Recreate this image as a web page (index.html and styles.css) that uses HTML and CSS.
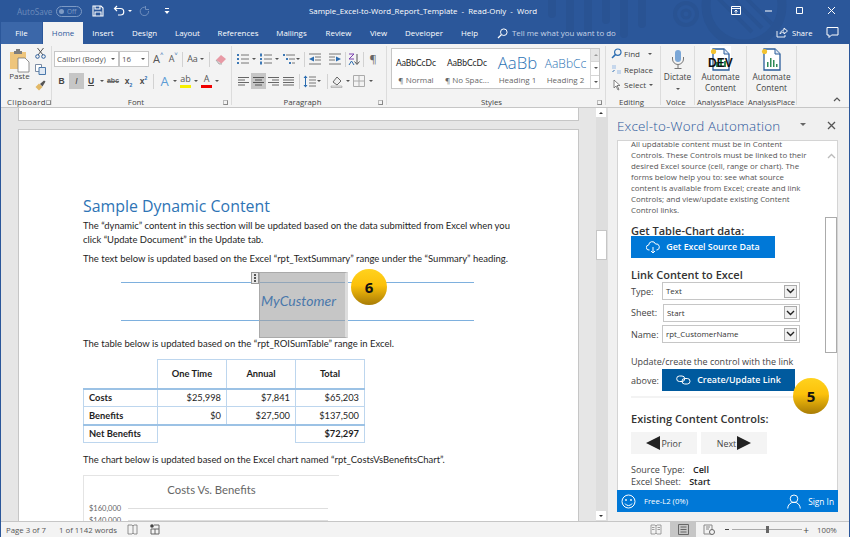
FILE: index.html
```html
<!DOCTYPE html>
<html lang="en">
<head>
<meta charset="utf-8">
<title>Sample_Excel-to-Word_Report_Template - Read-Only - Word</title>
<link rel="stylesheet" href="styles.css">
</head>
<body>
<div class="app">
  <header class="head">
    <svg class="decor" viewBox="0 0 430 44" width="430" height="44" aria-hidden="true">
      <g fill="none" stroke="#295393">
        <path d="M132 0v14M150 0v30M168 0v36M186 0v20M204 0v34M222 0v24" stroke-width="8" stroke-linecap="round"/>
        <circle cx="266" cy="14" r="11" stroke-width="4"/>
        <circle cx="266" cy="14" r="4" stroke-width="3"/>
        <circle cx="324" cy="6" r="38" stroke-width="9"/>
        <path d="M296 -4l36 36M306 -8l36 36M316 -12l36 36" stroke-width="4"/>
      </g>
    </svg>
    <div class="titlebar">
      <div class="qat">
        <span class="autosave">AutoSave</span>
        <span class="toggle"><i></i><b>Off</b></span>
        <svg class="q-save" width="12" height="12" viewBox="0 0 12 12"><path d="M1 1h8l2 2v8H1z M3 1v3h5V1 M3 11V7h6v4" fill="none" stroke="#fff" stroke-width="1.1"/></svg>
        <svg class="q-undo" width="12" height="12" viewBox="0 0 12 12"><path d="M4 1L1.500 3.500 4 6M2 3.500h5.500a3 3 0 0 1 0 6.500H5" fill="none" stroke="#fff" stroke-width="1.200"/></svg>
        <span class="car car-w"></span>
        <svg class="q-redo" width="11" height="11" viewBox="0 0 11 11"><path d="M7 1.500A4.200 4.200 0 1 0 9.600 5M6.500 0v3.500H10" fill="none" stroke="#6f8ebd" stroke-width="1"/></svg>
        <svg class="q-more" width="6" height="8" viewBox="0 0 6 8"><path d="M1 1h4v1H1zM.5 4h5L3 7z" fill="#fff"/></svg>
      </div>
      <div class="doc-title">Sample_Excel-to-Word_Report_Template &nbsp;-&nbsp; Read-Only &nbsp;-&nbsp; Word</div>
      <div class="winctl">
        <svg width="10" height="9" viewBox="0 0 10 9"><path d="M.5.500h9v8h-9zM.5 2.500h9M5 4v3.500M3.500 5.500L5 4l1.500 1.500" fill="none" stroke="#fff"/></svg>
        <svg width="9" height="9" viewBox="0 0 9 9"><path d="M1 5h7" stroke="#fff" fill="none"/></svg>
        <svg width="9" height="9" viewBox="0 0 9 9"><path d="M1.500 1.500h6v6h-6z" stroke="#fff" fill="none"/></svg>
        <svg width="9" height="9" viewBox="0 0 9 9"><path d="M1 1l7 7M8 1l-7 7" stroke="#fff" fill="none"/></svg>
      </div>
    </div>
    <nav class="tabs">
      <span class="tab t-file">File</span>
      <span class="tab t-home">Home</span>
      <span class="tab w40">Insert</span>
      <span class="tab w43">Design</span>
      <span class="tab w43">Layout</span>
      <span class="tab w58">References</span>
      <span class="tab w49">Mailings</span>
      <span class="tab w45">Review</span>
      <span class="tab w35">View</span>
      <span class="tab w56">Developer</span>
      <span class="tab w35">Help</span>
      <svg class="t-search" width="11" height="11" viewBox="0 0 11 11"><circle cx="6.800" cy="4.200" r="3.300" fill="none" stroke="#fff"/><path d="M4.400 6.600L1 10" stroke="#fff" stroke-width="1.300"/></svg>
      <span class="tellme">Tell me what you want to do</span>
      <span class="tab-right">
        <svg width="12" height="11" viewBox="0 0 12 11"><path d="M1 4v6h8V8M4 7c0-2 2-4 4-4V1l3.500 3L8 7V5C6 5 5 6 4 7z" fill="none" stroke="#fff" stroke-width=".9"/></svg>
        <span class="share">Share</span>
        <svg class="t-comment" width="12" height="11" viewBox="0 0 12 11"><path d="M.5.500h11v7.500H5L2.500 10.500V8h-2z" fill="none" stroke="#fff"/></svg>
      </span>
    </nav>
  </header>

  <section class="ribbon">
    <div class="group g-clip">
      <div class="g-body clip-body">
        <div class="paste">
          <svg width="21" height="24" viewBox="0 0 21 24"><path d="M1 3h16v17H1z" fill="#eec57c"/><path d="M5 2h8v3H5z" fill="#7d7d7d"/><path d="M7 0h4v2H7z" fill="#7d7d7d"/><path d="M9 9h7l4 4v10H9z" fill="#fff" stroke="#767676" stroke-width=".8"/></svg>
          <span>Paste</span>
          <span class="car"></span>
        </div>
        <div class="clip-tools">
          <svg width="11" height="12" viewBox="0 0 11 12"><path d="M2.500 1l5.500 7M8.500 1L3 8" stroke="#555" fill="none"/><circle cx="2.500" cy="9.500" r="1.800" fill="none" stroke="#2b5d9b"/><circle cx="8.500" cy="9.500" r="1.800" fill="none" stroke="#2b5d9b"/></svg>
          <svg width="11" height="11" viewBox="0 0 11 11"><path d="M.5.500h6v7h-6z" fill="#fff" stroke="#7a8ba3"/><path d="M4 3.500h6.500v7H4z" fill="#dfe8f3" stroke="#4a78ab"/></svg>
          <svg width="11" height="11" viewBox="0 0 11 11"><path d="M.5 7L4 10.500 7.500 7 4 3.500z" fill="#e2b866"/><path d="M5 4l2.500 2.500L10.500 1.500 9 .5z" fill="#555"/></svg>
        </div>
      </div>
      <div class="g-label"><span></span><span>Clipboard</span><span class="launch"></span></div>
    </div>

    <div class="group g-font">
      <div class="g-body rows">
        <div class="row r-font1">
          <span class="drop d-font">Calibri (Body)<span class="car"></span></span>
          <span class="drop d-size">16<span class="car"></span></span>
          <span class="gl w15 big">A<sup>˄</sup></span>
          <span class="gl w15 mid">A<sup>˅</sup></span>
          <span class="sep s-a"></span>
          <span class="gl w15 aa">Aa</span><span class="car"></span>
          <span class="sep s-er"></span>
          <svg class="erase" width="12" height="12" viewBox="0 0 12 12"><path d="M1 7l5-5 5 4-5 5z" fill="#e89aa5"/><path d="M1 7l3 4h3" fill="#ddd" stroke="#888" stroke-width=".6"/></svg>
        </div>
        <div class="row r-font2">
          <span class="gl w15 fm b">B</span>
          <span class="gl w15 fm i on">I</span>
          <span class="gl w14 fm u">U</span><span class="car c8"></span>
          <span class="gl w16 fm abc">abc</span>
          <span class="gl w15 fm xs">x<sub>2</sub></span>
          <span class="gl w15 fm xs">x<sup>2</sup></span>
          <span class="sep"></span>
          <span class="gl w15 texteff">A</span><span class="car c8"></span>
          <span class="gl w15 hl">ab<i class="yl"></i></span><span class="car c8"></span>
          <span class="gl w15 fc">A<i class="rd"></i></span><span class="car c8"></span>
        </div>
      </div>
      <div class="g-label"><span></span><span>Font</span><span class="launch"></span></div>
    </div>

    <div class="group g-para">
      <div class="g-body rows">
        <div class="row r-para1">
          <svg class="ic" width="14" height="12" viewBox="0 0 14 12"><path d="M1 1h2v2H1zM1 5h2v2H1zM1 9h2v2H1z" fill="#3d78b5"/><path d="M5 2h8M5 6h8M5 10h8" stroke="#777"/></svg><span class="car c8"></span>
          <svg class="ic" width="14" height="12" viewBox="0 0 14 12"><path d="M1 .5h2v3H1zM1 5h2v2H1zM1 8.500h2v3H1z" fill="#3d78b5"/><path d="M5 2h8M5 6h8M5 10h8" stroke="#777"/></svg><span class="car c8 c8b"></span>
          <svg class="ic" width="14" height="12" viewBox="0 0 14 12"><path d="M1 1h2v2H1zM4 5h2v2H4zM7 9h2v2H7z" fill="#3d78b5"/><path d="M4 2h9M7 6h6M10 10h3" stroke="#777"/></svg><span class="car c6"></span>
          <span class="sep s-p1"></span>
          <svg class="ic gap6" width="14" height="12" viewBox="0 0 14 12"><path d="M1 1h12M7 4h6M7 7h6M1 11h12" stroke="#777"/><path d="M6 3.500v5L1 6z" fill="#2b6cb0"/></svg>
          <svg class="ic gap6" width="14" height="12" viewBox="0 0 14 12"><path d="M1 1h12M1 4h6M1 7h6M1 11h12" stroke="#777"/><path d="M8 3.500v5L13 6z" fill="#2b6cb0"/></svg>
          <span class="sep s-p2"></span>
          <svg class="ic" width="12" height="13" viewBox="0 0 12 13"><path d="M9 1v10M6.500 8.500L9 11.500l2.500-3" stroke="#555" fill="none"/><path d="M1 1h5L1 6h5" stroke="#7a3fb0" fill="none"/><path d="M1 12l2.500-4L6 12" stroke="#2b6cb0" fill="none"/></svg>
          <span class="sep s-p3"></span>
          <span class="gl w15 pil">¶</span>
        </div>
        <div class="row r-para2">
          <svg class="al" width="15" height="11" viewBox="0 0 15 11"><path d="M2 1.500h11M2 4h7M2 6.500h11M2 9h7" stroke="#666"/></svg>
          <svg class="al on" width="15" height="16" viewBox="0 0 15 16"><path d="M2 4.500h11M4 7h7M2 9.500h11M4 12h7" stroke="#555"/></svg>
          <svg class="al" width="15" height="11" viewBox="0 0 15 11"><path d="M2 1.500h11M6 4h7M2 6.500h11M6 9h7" stroke="#666"/></svg>
          <svg class="al" width="15" height="11" viewBox="0 0 15 11"><path d="M2 1.500h11M2 4h11M2 6.500h11M2 9h11" stroke="#666"/></svg>
          <span class="sep s-p4"></span>
          <svg class="ic" width="13" height="13" viewBox="0 0 13 13"><path d="M6 2h7M6 5h7M6 8h7M6 11h7" stroke="#777"/><path d="M2.500 1v11" stroke="#2b6cb0"/><path d="M.5 3l2-2.500 2 2.500zM.5 10l2 2.500 2-2.500z" fill="#2b6cb0"/></svg><span class="car c-sp"></span>
          <span class="sep s-p5"></span>
          <svg class="ic" width="13" height="13" viewBox="0 0 13 13"><path d="M3 7l4-5 4 4-4 4z" fill="#eee" stroke="#666"/><path d="M1 11h11v1.500H1z" fill="#e8e8e8" stroke="#888" stroke-width=".5"/></svg><span class="car c-sh"></span>
          <svg class="ic gap3" width="12" height="12" viewBox="0 0 12 12"><path d="M.5.500h11v11H.5zM6 .5v11M.5 6h11" fill="none" stroke="#aaa"/></svg><span class="car c10"></span>
        </div>
      </div>
      <div class="g-label"><span></span><span>Paragraph</span><span class="launch"></span></div>
    </div>

    <div class="group g-styles">
      <div class="g-body">
        <div class="gallery">
          <div class="style s1"><span class="smp">AaBbCcDc</span><span class="nm">¶ Normal</span></div>
          <div class="style s2"><span class="smp">AaBbCcDc</span><span class="nm">¶ No Spac...</span></div>
          <div class="style s3"><span class="smp h1s">AaBb</span><span class="nm">Heading 1</span></div>
          <div class="style s4"><span class="smp h2s">AaBbCc</span><span class="nm">Heading 2</span></div>
          <div class="gal-sb">
            <span class="gs dis"><i class="car up"></i></span>
            <span class="gs"><i class="car"></i></span>
            <span class="gs"><i class="car"></i></span>
          </div>
        </div>
      </div>
      <div class="g-label"><span></span><span>Styles</span><span class="launch"></span></div>
    </div>

    <div class="group g-edit">
      <div class="g-body edit-body">
        <div class="ed"><svg width="11" height="11" viewBox="0 0 11 11"><circle cx="6.800" cy="4.200" r="3.200" fill="none" stroke="#2b6cb0" stroke-width="1.200"/><path d="M4.400 6.600L1 10" stroke="#2b6cb0" stroke-width="1.500"/></svg><span>Find</span><span class="car c-find"></span></div>
        <div class="ed"><svg width="11" height="11" viewBox="0 0 11 11"><path d="M1 1h4v4H1z" fill="#c6d7ec"/><path d="M6 6h4v4H6z" fill="#c6d7ec"/><path d="M1.500 8l2-2" stroke="#2b6cb0"/></svg><span>Replace</span></div>
        <div class="ed"><svg width="11" height="12" viewBox="0 0 11 12"><path d="M3 1v8l2-2 2 4 1-.5-2-4h3z" fill="#fff" stroke="#666" stroke-width=".8"/></svg><span>Select</span><span class="car"></span></div>
      </div>
      <div class="g-label"><span></span><span>Editing</span><span></span></div>
    </div>

    <div class="group g-voice">
      <div class="g-body big-btn">
        <svg width="14" height="21" viewBox="0 0 14 21"><rect x="4" y="1" width="6" height="12" rx="3" fill="#7ba7d7"/><path d="M1.500 8v2a5.500 5.500 0 0 0 11 0V8M7 16v3M3.500 19.500h7" fill="none" stroke="#777"/></svg>
        <span class="bb-t">Dictate</span>
        <span class="car"></span>
      </div>
      <div class="g-label"><span></span><span>Voice</span><span></span></div>
    </div>

    <div class="group g-ap">
      <div class="g-body big-btn">
        <div class="ap-ic dev">
          <svg width="21" height="23" viewBox="0 0 21 23"><path d="M3 1h11l5 5v16H3z" fill="#fff" stroke="#2b5d9b" stroke-width="1.300"/><path d="M14 1v5h5" fill="#dfe8f3" stroke="#2b5d9b"/><path d="M6 19V14h2v5zM10 19V10h2v9zM14 19v-6h2v6z" fill="#2f8a57"/><circle cx="3.500" cy="3.500" r="2.600" fill="#f2c230"/></svg>
          <span class="dev-t">DEV</span>
        </div>
        <span class="bb-t">Automate</span>
        <span class="bb-t">Content</span>
      </div>
      <div class="g-label ap-l"><span>AnalysisPlace</span></div>
    </div>

    <div class="group g-ap g-ap2">
      <div class="g-body big-btn">
        <div class="ap-ic">
          <svg width="21" height="23" viewBox="0 0 21 23"><path d="M3 1h11l5 5v16H3z" fill="#fff" stroke="#2b5d9b" stroke-width="1.300"/><path d="M14 1v5h5" fill="#dfe8f3" stroke="#2b5d9b"/><path d="M6 19V14h1.500v5zM9 19V10h1.500v9zM12 19v-7h1.500v7zM15 19v-3h1.500v3z" fill="#2f8a57"/><circle cx="3.500" cy="3.500" r="2.600" fill="#f2c230"/></svg>
        </div>
        <span class="bb-t">Automate</span>
        <span class="bb-t">Content</span>
      </div>
      <div class="g-label ap-l"><span>AnalysisPlace</span></div>
    </div>

    <div class="rib-end"><svg width="8" height="5" viewBox="0 0 8 5"><path d="M1 4l3-3 3 3" fill="none" stroke="#555" stroke-width="1.200"/></svg></div>
  </section>

  <main class="work">
    <div class="docarea">
      <div class="page page-prev"></div>
      <article class="page page-cur">
        <h1 class="d-h">Sample Dynamic Content</h1>
        <p class="d-p p-first">The “dynamic” content in this section will be updated based on the data submitted from Excel when you click “Update Document” in the Update tab.</p>
        <p class="d-p p-next">The text below is updated based on the Excel “rpt_TextSummary” range under the “Summary” heading.</p>
        <div class="cc-wrap">
          <div class="cc-line"></div>
          <div class="cc-box"><span class="cc-handle"><i></i><i></i><i></i></span><span class="cc-text">MyCustomer</span></div>
          <div class="badge b6">6</div>
        </div>
        <p class="d-p p-tbl">The table below is updated based on the “rpt_ROISumTable” range in Excel.</p>
        <table class="roi">
          <colgroup><col class="c-a"><col class="c-b"><col class="c-b"><col class="c-b"></colgroup>
          <tr class="r-h"><td class="none"></td><th>One Time</th><th>Annual</th><th>Total</th></tr>
          <tr class="r-b r-first"><th class="lh">Costs</th><td>$25,998</td><td>$7,841</td><td>$65,203</td></tr>
          <tr class="r-b"><th class="lh">Benefits</th><td>$0</td><td>$27,500</td><td>$137,500</td></tr>
          <tr class="r-b r-net"><th class="lh">Net Benefits</th><td class="none" colspan="2"></td><th class="rt">$72,297</th></tr>
        </table>
        <p class="d-p p-chart">The chart below is updated based on the Excel chart named “rpt_CostsVsBenefitsChart”.</p>
        <div class="chart">
          <div class="ch-title">Costs Vs. Benefits</div>
          <div class="ch-row"><span>$160,000</span><i></i></div>
          <div class="ch-row"><span>$140,000</span><i></i></div>
          <div class="ch-bar"></div>
        </div>
      </article>
    </div>

    <div class="vscroll">
      <span class="vs-btn"><i class="car up"></i></span>
      <span class="vs-thumb"></span>
      <span class="vs-btn vs-end"><i class="car"></i></span>
    </div>

    <aside class="pane">
      <div class="pane-head">
        <span class="pane-title">Excel-to-Word Automation</span>
        <span class="car pane-car"></span>
        <svg class="pane-x" width="9" height="9" viewBox="0 0 9 9"><path d="M1 1l7 7M8 1l-7 7" stroke="#555" stroke-width="1.300"/></svg>
      </div>
      <div class="pane-box">
        <div class="pane-main">
          <div class="pane-flow">
            <p class="intro">All updatable content must be in Content Controls. These Controls must be linked to their desired Excel source (cell, range or chart). The forms below help you to: see what source content is available from Excel; create and link Controls; and view/update existing Content Control links.</p>
            <h2 class="ph ph1">Get Table-Chart data:</h2>
            <button class="btn b-get">
              <svg width="14" height="13" viewBox="0 0 14 13"><path d="M3.500 9H3a2.500 2.500 0 0 1-.3-5A3.500 3.500 0 0 1 9.500 3 3 3 0 0 1 11 9h-.5" fill="none" stroke="#fff"/><path d="M7 6v6M5 10l2 2 2-2" fill="none" stroke="#fff"/></svg>
              Get Excel Source Data
            </button>
            <h2 class="ph ph2">Link Content to Excel</h2>
            <div class="fld f-type"><label>Type:</label><span class="sel"><span>Text</span><i class="sel-b"><svg width="9" height="6" viewBox="0 0 9 6"><path d="M1 1l3.500 3.500L8 1" fill="none" stroke="#222" stroke-width="1.400"/></svg></i></span></div>
            <div class="fld f-sheet"><label>Sheet:</label><span class="sel"><span>Start</span><i class="sel-b"><svg width="9" height="6" viewBox="0 0 9 6"><path d="M1 1l3.500 3.500L8 1" fill="none" stroke="#222" stroke-width="1.400"/></svg></i></span></div>
            <div class="fld"><label>Name:</label><span class="sel"><span>rpt_CustomerName</span><i class="sel-b"><svg width="9" height="6" viewBox="0 0 9 6"><path d="M1 1l3.500 3.500L8 1" fill="none" stroke="#222" stroke-width="1.400"/></svg></i></span></div>
            <p class="upd">Update/create the control with the link</p>
            <div class="upd-row">
              <span>above:</span>
              <button class="btn b-link">
                <svg width="15" height="10" viewBox="0 0 15 10"><rect x=".7" y="1" width="8" height="5.500" rx="2.700" fill="none" stroke="#fff"/><rect x="6" y="3.500" width="8" height="5.500" rx="2.700" fill="none" stroke="#fff"/></svg>
                Create/Update Link
              </button>
            </div>
            <div class="divider"></div>
            <h2 class="ph ph3">Existing Content Controls:</h2>
            <div class="nav-btns">
              <button class="nb"><span class="tri tl"></span>Prior</button>
              <button class="nb">Next<span class="tri tr"></span></button>
            </div>
            <div class="kv k1">Source Type: <b>Cell</b></div>
            <div class="kv k2">Excel Sheet: <b>Start</b></div>
          </div>
          <div class="pane-sb">
            <svg class="sb-chev" width="9" height="6" viewBox="0 0 9 6"><path d="M1 5l3.500-3.500L8 5" fill="none" stroke="#bbb" stroke-width="1.300"/></svg>
            <span class="sb-thumb"></span>
          </div>
          <div class="badge b5">5</div>
        </div>
        <div class="pane-foot">
          <svg width="15" height="15" viewBox="0 0 15 15"><circle cx="7.500" cy="7.500" r="6.500" fill="none" stroke="#fff"/><circle cx="5" cy="6" r=".9" fill="#fff"/><circle cx="10" cy="6" r=".9" fill="#fff"/><path d="M4 9.500a4 4 0 0 0 7 0" fill="none" stroke="#fff"/></svg>
          <span class="lic">Free-L2 (0%)</span>
          <svg class="pf-user" width="14" height="15" viewBox="0 0 14 15"><circle cx="7" cy="4.800" r="3.800" fill="none" stroke="#fff"/><path d="M.7 14.500a6.300 6.300 0 0 1 12.600 0" fill="none" stroke="#fff"/></svg>
          <span class="signin">Sign In</span>
        </div>
      </div>
    </aside>
  </main>

  <footer class="status">
    <span class="st-a">Page 3 of 7</span>
    <span class="st-b">1 of 1142 words</span>
    <svg class="st-c" width="12" height="11" viewBox="0 0 12 11"><path d="M1 1h4l1 1 1-1h3v9H7L6 9l-1 1H1zM6 2v7" fill="none" stroke="#777" stroke-width=".8"/></svg>
    <svg class="st-d" width="10" height="11" viewBox="0 0 10 11"><circle cx="2" cy="2" r="1.800" fill="#444"/><path d="M4 1h5v9H1V5h8M5 5v5" fill="none" stroke="#666"/></svg>
    <span class="st-right">
      <svg width="12" height="11" viewBox="0 0 12 11"><path d="M1 1h4l1 1 1-1h4v9H7l-1-1-1 1H1zM6 2v7M2 3.500h2.500M2 5.500h2.500M7.500 3.500H10M7.500 5.500H10" fill="none" stroke="#888" stroke-width=".8"/></svg>
      <span class="view-on"><svg width="11" height="11" viewBox="0 0 11 11"><path d="M.5.500h10v10H.5zM2.500 3h6M2.500 5.500h6M2.500 8h6" fill="none" stroke="#666"/></svg></span>
      <svg class="vw" width="12" height="11" viewBox="0 0 12 11"><path d="M1 1h8v9H1zM3 3h4M3 5h3" fill="none" stroke="#888"/><circle cx="9" cy="8" r="2.500" fill="#f3f3f3" stroke="#666"/></svg>
      <span class="zm-minus"></span>
      <span class="zm-track"><i></i></span>
      <span class="zm-plus">+</span>
      <span class="zm-val">100%</span>
    </span>
  </footer>
</div>
</body>
</html>
```

FILE: styles.css
```css
* { box-sizing: border-box; }
html, body { margin: 0; padding: 0; }
body { width: 850px; height: 537px; overflow: hidden; font-family: "Open Sans", "Liberation Sans", sans-serif; color: #444; }
.app { width: 850px; height: 537px; display: flex; flex-direction: column; background: #e6e6e6; border-left: 1px solid #2b579a; border-right: 1px solid #2b579a; overflow: hidden; }

/* head */
.head { position: relative; height: 44px; margin: 0 -1px; background: #2b579a; color: #fff; flex: none; }
.decor { position: absolute; right: 0; top: 0; }
.titlebar { position: relative; height: 22px; display: flex; align-items: center; }
.qat { display: flex; align-items: center; width: 170px; padding-left: 17px; }
.autosave { font-size: 8.100px; color: #6d8cbb; width: 39px; }
.toggle { width: 26px; height: 11px; border: 1px solid #7d9ac5; border-radius: 6px; display: flex; align-items: center; padding-left: 2px; gap: 3px; }
.toggle i { width: 5px; height: 5px; border-radius: 50%; background: #7d9ac5; }
.toggle b { font-size: 6.500px; font-weight: 400; color: #7d9ac5; }
.q-save { margin-left: 10px; }
.q-undo { margin-left: 9px; }
.car { display: inline-block; width: 0; height: 0; border-left: 2.500px solid transparent; border-right: 2.500px solid transparent; border-top: 2.500px solid #555; flex: none; }
.car.up { border-top: 0; border-bottom: 2.500px solid #999; }
.car-w { border-top-color: #fff; margin-left: 3px; }
.q-redo { margin-left: 7px; }
.q-more { margin-left: 14px; }
.doc-title { position: absolute; left: 309px; top: 4px; font-size: 7.900px; line-height: 14px; white-space: nowrap; color: #fff; }
.winctl { position: absolute; top: 6px; left: 731px; display: flex; gap: 22.500px; }

.tabs { position: relative; height: 22px; display: flex; align-items: center; font-size: 7.900px; padding-left: 1px; }
.tab { text-align: center; line-height: 22px; height: 22px; color: #fff; flex: none; }
.t-file { width: 41px; background: #3b67a9; }
.t-home { width: 40px; margin-left: 1px; background: #f3f3f3; color: #2b579a; }
.w35 { width: 35px; } .w40 { width: 40px; } .w43 { width: 43px; } .w45 { width: 45px; }
.w49 { width: 49px; } .w56 { width: 56px; } .w58 { width: 58px; }
.t-search { margin-left: 10px; }
.tellme { margin-left: 4px; color: #c6d3e6; white-space: nowrap; }
.tab-right { position: absolute; left: 776px; top: 5px; display: flex; align-items: center; }
.share { margin-left: 4px; width: 32px; font-size: 7.600px; }
.t-comment { margin-left: 2px; width: 13px; }

/* ribbon */
.ribbon { height: 64px; flex: none; margin: 0 -1px; background: #f3f3f3; border-bottom: 1px solid #c6c6c6; display: flex; padding-top: 2px; color: #444; }
.group { position: relative; display: flex; flex-direction: column; border-right: 1px solid #dcdcdc; flex: none; height: 59px; }
.g-body { height: 50px; flex: none; }
.g-label { height: 12px; font-size: 7.800px; line-height: 12px; display: grid; grid-template-columns: 1fr auto 1fr; color: #444; white-space: nowrap; padding-right: 3px; }
.launch { justify-self: end; align-self: center; width: 5px; height: 5px; border: 1px solid #888; border-top-color: #bbb; border-left-color: #bbb; }
.g-clip { width: 52px; }
.g-clip .g-label { letter-spacing: .4px; padding: 0 0 0 2px; }
.g-font { width: 180px; }
.g-font .g-label { padding-right: 3px; }
.g-font .g-label span:nth-child(2) { transform: translateX(-4px); }
.g-para { width: 155px; }
.g-para .g-label span:nth-child(2) { transform: translateX(-5px); }
.g-styles { width: 219px; }
.g-styles .g-label span:nth-child(2) { transform: translateX(-3px); }
.g-edit { width: 55px; }
.g-voice { width: 34px; }
.g-ap { width: 52px; }
.g-ap2 { width: 50px; }
.clip-body { display: flex; padding: 3px 0 0 9px; }
.paste { width: 21px; display: flex; flex-direction: column; align-items: center; font-size: 8px; }
.paste span:nth-child(2) { margin-top: -3px; line-height: 12px; }
.paste .car { margin-top: 6px; }
.clip-tools { display: flex; flex-direction: column; gap: 5px; margin: -2px 0 0 5px; }
.rows { display: flex; flex-direction: column; gap: 6px; padding: 5px 0 0 2px; }
.row { display: flex; align-items: center; height: 16px; white-space: nowrap; }
.drop { height: 16px; background: #fff; border: 1px solid #c6c6c6; font-size: 7.900px; line-height: 14px; padding-left: 2px; display: flex; align-items: center; justify-content: space-between; padding-right: 3px; color: #555; }
.d-font { width: 65px; }
.d-size { width: 30px; }
.gl { display: inline-block; text-align: center; flex: none; line-height: 16px; position: relative; }
.w14 { width: 14px; } .w15 { width: 15px; } .w16 { width: 16px; }
.big { font-size: 11px; color: #555; }
.mid { font-size: 9px; color: #555; }
.big sup, .mid sup { font-size: 6px; color: #2b6cb0; position: absolute; top: -3px; line-height: 12px; }
.aa { font-size: 9px; color: #555; }
.sep { width: 1px; height: 15px; background: #d2d2d2; margin: 0 3px 0 2px; flex: none; }
.s-a { margin: 0 2px 0 3px; }
.s-er { margin: 0 5px 0 5px; }
.fm { font-size: 8.500px; color: #444; height: 16px; font-family: "Liberation Sans", sans-serif; }
.b { font-weight: 700; }
.i { font-style: italic; }
.on { background: #c6c6c6; }
.u { text-decoration: underline; font-weight: 700; }
.abc { font-size: 7px; font-weight: 700; text-decoration: line-through; color: #666; }
.xs { font-weight: 700; }
.xs sub, .xs sup { font-size: 5px; color: #2b6cb0; line-height: 0; }
.texteff { font-size: 13px; color: #5b9bd5; }
.hl, .fc { font-size: 9px; color: #555; line-height: 12px; height: 16px; }
.hl i, .fc i { display: block; height: 3px; margin: 0 2px; }
.yl { background: #f7f000; }
.rd { background: #f00000; }
.c8 { margin: 0 1px; }
.u + .c8 { margin: 0 1px 0 2px; }
.c6 { margin: 0 2px 0 0; }
.c10 { margin: 0 2px 0 3.500px; }
.ic { flex: none; }
.r-para1 { padding-left: 2px; }
.r-para1 .c8 { margin: 0 3px 0 2px; }
.r-para1 .c8b { margin: 0 3px 0 1.500px; }
.s-p1 { margin: 0 0 0 2px; }
.gap6 { margin: 0 3px; }
.s-p2 { margin: 0 2.500px 0 0; }
.s-p3 { margin: 0 1px 0 3px; }
.pil { font-size: 11px; color: #666; margin-left: .5px; }
.r-para2 { padding-left: 2px; }
.al { flex: none; }
.s-p4 { margin: 0 3px 0 3px; }
.c-sp { margin: 0 4px 0 1px; }
.s-p5 { margin: 0 2px 0 2px; }
.c-sh { margin: 0 3px 0 2.500px; }
.gap3 { margin-left: .5px; }

.g-styles .g-body { padding: 2px 5px 0 4px; }
.gallery { height: 41px; background: #fff; border: 1px solid #c6c6c6; display: flex; white-space: nowrap; overflow: hidden; }
.style { display: flex; flex-direction: column; align-items: center; overflow: hidden; flex: none; }
.s1 { width: 48px; } .s2 { width: 54px; } .s3 { width: 47px; } .s4 { width: 49px; }
.smp { height: 24px; display: flex; align-items: center; padding-top: 4px; font-family: "Lato", sans-serif; font-size: 8.500px; color: #222; }
.nm { font-size: 8px; color: #666; line-height: 10px; margin-top: 2px; }
.h1s { font-size: 16.800px; color: #2e74b5; font-family: "Open Sans", sans-serif; padding-top: 2px; font-weight: 300; }
.h2s { font-size: 12px; color: #2e74b5; font-family: "Open Sans", sans-serif; font-weight: 300; }
.gal-sb { margin-left: auto; width: 10px; display: flex; flex-direction: column; border-left: 1px solid #d6d6d6; flex: none; }
.gs { flex: 1; display: flex; align-items: center; justify-content: center; border-bottom: 1px solid #d6d6d6; }
.gs:last-child { border-bottom: 0; }
.dis { background: #e6e6e6; }

.edit-body { padding: 1px 0 0 5px; display: flex; flex-direction: column; gap: 2.500px; font-size: 8px; }
.ed { display: flex; align-items: center; height: 13px; color: #444; }
.ed span:nth-child(2) { margin-left: 2px; margin-right: 3px; }
.c-find { margin-left: 5px; }
.big-btn { display: flex; flex-direction: column; align-items: center; font-size: 8.300px; line-height: 11px; }
.g-voice .big-btn > svg { margin-top: 3px; }
.bb-t { white-space: nowrap; }
.g-voice .bb-t { margin-top: 1px; }
.g-voice .car { margin-top: 6px; }
.ap-ic { height: 25px; width: 21px; position: relative; padding-top: 2px; flex: none; }
.dev { background: #fff; }
.dev-t { position: absolute; left: -2px; top: 10px; font: 700 12px/14px "Liberation Sans", sans-serif; color: #111; }
.ap-l { display: block; text-align: center; padding: 0; font-size: 7.600px; }
.rib-end { flex: 1; display: flex; align-items: flex-end; justify-content: flex-end; padding: 0 9px 3px 0; height: 59px; }

/* work area */
.work { flex: 1; min-height: 0; display: flex; }
.docarea { width: 595px; flex: none; overflow: hidden; padding-left: 17px; }
.page { width: 561px; background: #fff; border: 1px solid #c6c6c6; }
.page-prev { height: 13px; border-top: 0; margin-bottom: 8px; }
.page-cur { height: 420px; padding: 0 0 0 64px; font-family: "Lato", sans-serif; color: #1e1e1e; position: relative; }
.d-h { margin: 65px 0 0; font: 400 15.900px/22px "Open Sans", sans-serif; color: #2e74b5; }
.d-p { margin: 0; font-size: 9.500px; line-height: 14px; width: 440px; }
.p-first { margin-top: 2px; font-size: 9.430px; }
.p-next { margin-top: 5px; white-space: nowrap; }
.cc-wrap { position: relative; height: 66px; margin-top: 6px; }
.cc-line { position: absolute; left: 38px; width: 353px; top: 10px; height: 39px; border-top: 1px solid #7eb0de; border-bottom: 1px solid #7eb0de; }
.cc-box { position: absolute; left: 176px; top: 0; width: 89px; height: 66px; background: rgba(160, 160, 160, .6); border: 1px solid #aaa; border-right: 3px solid #ddd; display: flex; align-items: center; justify-content: center; }
.cc-handle { position: absolute; left: -9px; top: -1px; width: 8px; height: 12px; background: #e8e8e8; border: 1px solid #999; display: flex; flex-direction: column; align-items: center; justify-content: center; gap: 1px; }
.cc-handle i { width: 2px; height: 2px; background: #555; }
.cc-text { font-size: 14px; font-style: italic; color: #4a78ab; margin: -10px 8px 0 0; }
.badge { position: absolute; width: 36px; height: 36px; border-radius: 50%; background: linear-gradient(#ffd21e 0%, #fcc10a 45%, #a87c06 100%); color: #111; font: 700 15px/36px "Open Sans", sans-serif; text-align: center; }
.b6 { left: 268px; top: -3px; }
.b5 { left: 175px; top: 237px; }
.p-tbl { margin-top: -1px; }
.roi { border-collapse: collapse; table-layout: fixed; width: 281px; margin-top: 8px; font-size: 9.300px; color: #1e1e1e; }
.c-a { width: 74px; } .c-b { width: 69px; }
.roi td, .roi th { border: 1px solid #bdd6ee; padding: 0 5px; text-align: right; height: 18px; font-weight: 400; }
.roi th { font-weight: 700; }
.r-h th { text-align: center; height: 29px; }
.r-h td.none { border-top: 0; border-left: 0; }
.roi th.lh { text-align: left; }
.r-first td, .r-first th { border-top: 2px solid #9cc2e5; }
.r-net td, .r-net th { border-top: 2px solid #9cc2e5; }
.r-net td.none { border-bottom: 0; }
.p-chart { margin-top: 10px; width: auto; font-size: 9.430px; }
.chart { margin-top: 8px; width: 256px; height: 60px; border-top: 1px solid #e4e4e4; border-left: 1px solid #e4e4e4; position: relative; }
.ch-title { text-align: center; font-size: 11.300px; color: #666; line-height: 14px; padding-top: 7px; height: 26px; }
.ch-row { display: flex; align-items: center; height: 12px; font-size: 7.500px; color: #666; padding-left: 5px; }
.ch-row span { width: 39px; }
.ch-row i { width: 200px; height: 1px; background: #dedede; }
.ch-bar { position: absolute; left: 179px; top: 46px; width: 32px; height: 12px; background: #2d7a3c; }

.vscroll { width: 12px; flex: none; background: #dedede; display: flex; flex-direction: column; }
.vs-btn { height: 9px; width: 10px; background: #fff; display: flex; align-items: center; justify-content: center; flex: none; }
.vs-thumb { width: 11px; height: 30px; margin-top: 113px; background: #fff; border: 1px solid #c6c6c6; }
.vs-end { margin-top: auto; margin-bottom: 1px; }
.vs-end .car { border-top-color: #333; }
.vs-btn .up { border-bottom-color: #333; }

/* pane */
.pane { width: 242px; flex: none; background: #f0f0f0; padding: 0 12px 9px 9px; display: flex; flex-direction: column; min-height: 0; }
.pane-head { height: 32px; flex: none; display: flex; align-items: center; position: relative; padding-top: 4px; }
.pane-title { font-size: 13.400px; font-weight: 300; color: #2b579a; white-space: nowrap; letter-spacing: .2px; }
.pane-car { position: absolute; left: 183px; top: 15px; border-left-width: 3px; border-right-width: 3px; border-top: 3px solid #666; }
.pane-x { position: absolute; left: 210px; top: 13px; }
.pane-box { flex: 1; min-height: 0; display: flex; flex-direction: column; border: 1px solid #d4d4d4; border-bottom: 0; background: #fff; }
.pane-main { flex: 1; min-height: 0; display: flex; position: relative; }
.pane-flow { flex: 1; min-width: 0; padding: 0 0 0 13px; color: #333; }
.intro { margin: -2px 0 0; font-size: 7.900px; line-height: 11px; color: #555; width: 182px; }
.ph { margin: 0; font-size: 11px; font-weight: 600; line-height: 14px; color: #333; white-space: nowrap; }
.ph1 { margin-top: 8px; }
.btn { display: flex; align-items: center; justify-content: center; border: 0; color: #fff; font: 600 8.900px/22px "Open Sans", sans-serif; height: 22px; padding: 0; }
.b-get { width: 144px; background: #0078d7; gap: 6px; margin-top: -2px; }
.ph2 { margin-top: 10px; }
.fld { display: flex; align-items: center; font-size: 9px; height: 18px; margin-top: 3.500px; color: #444; }
.f-type { margin-top: 0; }
.f-sheet .sel { margin-left: 1px; width: 137px; }
.fld label { width: 31px; flex: none; }
.sel { width: 138px; height: 18px; border: 1px solid #c6c6c6; display: flex; align-items: center; justify-content: space-between; padding: 0 2px 0 3px; font-size: 7.900px; color: #333; background: #fff; }
.sel-b { width: 13px; height: 13px; border: 1px solid #aaa; display: flex; align-items: center; justify-content: center; background: #f0f0f0; }
.upd { margin: 12px 0 0; font-size: 9px; line-height: 13px; color: #444; white-space: nowrap; }
.upd-row { display: flex; align-items: center; font-size: 9px; color: #444; margin-top: 1px; }
.upd-row span { width: 31px; flex: none; }
.b-link { width: 133px; background: #005a9e; gap: 6px; }
.divider { height: 2px; width: 195px; background: #f3f3f3; margin-top: 5px; }
.ph3 { margin-top: 14px; }
.nav-btns { display: flex; gap: 4px; margin-top: 6px; }
.nb { width: 66px; height: 22px; background: #f4f4f4; border: 0; display: flex; align-items: center; justify-content: center; font: 400 8.900px "Open Sans", sans-serif; color: #444; padding: 0; gap: 1px; }
.tri { width: 0; height: 0; border-top: 7px solid transparent; border-bottom: 7px solid transparent; }
.tl { border-right: 14px solid #222; }
.tr { border-left: 14px solid #222; }
.kv { font-size: 9px; line-height: 12px; color: #444; white-space: nowrap; }
.kv b { font-weight: 600; margin-left: 6px; color: #222; }
.k1 { margin-top: 10px; }
.pane-sb { width: 12px; flex: none; display: flex; flex-direction: column; align-items: center; padding-top: 12px; }
.sb-thumb { width: 12px; height: 136px; margin-top: 58px; background: #fff; border: 1px solid #ababab; flex: none; }
.pane-foot { height: 22px; flex: none; margin: 0 -1px; background: #0078d7; color: #fff; display: flex; align-items: center; padding: 0 4px; font-size: 8.300px; }
.lic { margin-left: 8px; font-size: 7.700px; }
.pf-user { margin-left: auto; }
.signin { margin-left: 7px; }

/* status */
.status { height: 16px; flex: none; margin: 0 -1px; background: #f3f3f3; border-top: 1px solid #c6c6c6; display: flex; align-items: center; font-size: 7.800px; color: #555; position: relative; }
.st-a { margin-left: 6px; width: 53px; }
.st-b { width: 68px; }
.st-d { margin-left: 11px; }
.st-right { margin-left: auto; display: flex; align-items: center; height: 15px; padding-right: 15px; }
.view-on { width: 26px; height: 15px; background: #c6c6c6; display: flex; align-items: center; justify-content: center; margin-left: 8px; }
.vw { margin-left: 7px; }
.zm-minus { width: 4px; height: 1px; background: #444; margin-left: 10px; }
.zm-track { width: 70px; height: 1px; background: #aaa; margin-left: 3px; position: relative; display: block; }
.zm-track i { position: absolute; left: 33.500px; top: -3px; width: 3px; height: 7px; background: #666; }
.zm-plus { font-size: 10px; width: 8px; text-align: center; color: #444; }
.zm-val { margin-left: 7px; width: 18px; white-space: nowrap; }
```
